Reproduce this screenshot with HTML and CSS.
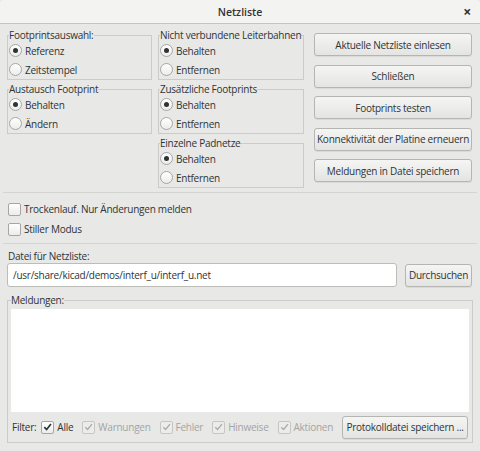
FILE: index.html
```html
<!DOCTYPE html>
<html lang="de">
<head>
<meta charset="utf-8">
<title>Netzliste</title>
<link rel="stylesheet" href="styles.css">
</head>
<body>
<div class="window">
  <div class="titlebar">
    <span class="title">Netzliste</span>
    <span class="close">×</span>
  </div>

  <div class="top">
    <div class="col col1">
      <fieldset class="group">
        <legend>Footprintsauswahl:</legend>
        <div class="opt"><span class="radio on"></span>Referenz</div>
        <div class="opt"><span class="radio"></span>Zeitstempel</div>
      </fieldset>
      <fieldset class="group">
        <legend>Austausch Footprint</legend>
        <div class="opt"><span class="radio on"></span>Behalten</div>
        <div class="opt"><span class="radio"></span>Ändern</div>
      </fieldset>
    </div>
    <div class="col col2">
      <fieldset class="group">
        <legend>Nicht verbundene Leiterbahnen</legend>
        <div class="opt"><span class="radio on"></span>Behalten</div>
        <div class="opt"><span class="radio"></span>Entfernen</div>
      </fieldset>
      <fieldset class="group">
        <legend>Zusätzliche Footprints</legend>
        <div class="opt"><span class="radio on"></span>Behalten</div>
        <div class="opt"><span class="radio"></span>Entfernen</div>
      </fieldset>
      <fieldset class="group">
        <legend>Einzelne Padnetze</legend>
        <div class="opt"><span class="radio on"></span>Behalten</div>
        <div class="opt"><span class="radio"></span>Entfernen</div>
      </fieldset>
    </div>
    <div class="col col3">
      <button class="btn big">Aktuelle Netzliste einlesen</button>
      <button class="btn big">Schließen</button>
      <button class="btn big">Footprints testen</button>
      <button class="btn big">Konnektivität der Platine erneuern</button>
      <button class="btn big">Meldungen in Datei speichern</button>
    </div>
  </div>

  <div class="sep"></div>

  <div class="checks">
    <div class="chk-row"><span class="check"></span>Trockenlauf. Nur Änderungen melden</div>
    <div class="chk-row"><span class="check"></span>Stiller Modus</div>
  </div>

  <div class="sep sep2"></div>

  <div class="file-label">Datei für Netzliste:</div>
  <div class="file-row">
    <div class="input">/usr/share/kicad/demos/interf_u/interf_u.net</div>
    <button class="btn browse">Durchsuchen</button>
  </div>

  <fieldset class="group messages">
    <legend>Meldungen:</legend>
    <div class="log"></div>
    <div class="filter">
      <span class="filter-label">Filter:</span>
      <span class="fchk"><span class="check on"><svg viewBox="0 0 12 12" width="12" height="12"><path d="M2.5 6.2 L5 8.7 L9.8 2.8" fill="none" stroke="#2e3436" stroke-width="1.8"/></svg></span>Alle</span>
      <span class="fchk dis"><span class="check on"><svg viewBox="0 0 12 12" width="12" height="12"><path d="M2.5 6.2 L5 8.7 L9.8 2.8" fill="none" stroke="#a9aba9" stroke-width="1.4"/></svg></span>Warnungen</span>
      <span class="fchk dis"><span class="check on"><svg viewBox="0 0 12 12" width="12" height="12"><path d="M2.5 6.2 L5 8.7 L9.8 2.8" fill="none" stroke="#a9aba9" stroke-width="1.4"/></svg></span>Fehler</span>
      <span class="fchk dis"><span class="check on"><svg viewBox="0 0 12 12" width="12" height="12"><path d="M2.5 6.2 L5 8.7 L9.8 2.8" fill="none" stroke="#a9aba9" stroke-width="1.4"/></svg></span>Hinweise</span>
      <span class="fchk dis"><span class="check on"><svg viewBox="0 0 12 12" width="12" height="12"><path d="M2.5 6.2 L5 8.7 L9.8 2.8" fill="none" stroke="#a9aba9" stroke-width="1.4"/></svg></span>Aktionen</span>
      <button class="btn save">Protokolldatei speichern ...</button>
    </div>
  </fieldset>
</div>
</body>
</html>
```

FILE: styles.css
```css
* { box-sizing: border-box; }
html, body { margin: 0; padding: 0; }
body {
  width: 480px;
  height: 451px;
  background: #e8e8e7;
  font-family: "Open Sans", "Noto Sans", sans-serif;
  font-size: 10px;
  letter-spacing: -0.25px;
  color: #2e3436;
  overflow: hidden;
}
.window { width: 480px; height: 451px; display: flex; flex-direction: column; }

.titlebar {
  height: 24px;
  flex: none;
  background: #f3f3f2;
  border-bottom: 1px solid #c4c4c1;
  display: flex;
  align-items: center;
  justify-content: center;
  position: relative;
  border-radius: 4px 4px 0 0;
}
.title { font-weight: 600; font-size: 10.5px; color: #2e3436; letter-spacing: 0; }
.close {
  position: absolute;
  right: 9px;
  top: 4px;
  font-size: 14px;
  font-weight: 700;
  line-height: 16px;
}

.top {
  display: flex;
  padding: 5px 8px 0 7px;
  flex: none;
}
.col { display: flex; flex-direction: column; }
.col1 { width: 145px; gap: 3px; }
.col2 { width: 146px; margin-left: 6px; gap: 3px; }
.col3 { width: 158px; margin-left: 10px; padding-top: 4px; gap: 8.5px; }

.group {
  margin: 0;
  padding: 0 2px 0 1px;
  border: 1px solid #cbcbc8;
  min-width: 0;
}
.group legend {
  padding: 0;
  margin-left: 0;
  line-height: 12px;
  height: 12px;
  white-space: nowrap;
  color: #2e3436;
}
.opt {
  height: 19px;
  display: flex;
  align-items: center;
  white-space: nowrap;
}
.radio {
  width: 13px;
  height: 13px;
  border-radius: 50%;
  border: 1px solid #a6a6a3;
  background: linear-gradient(#ffffff, #ececeb);
  margin-right: 3px;
  flex: none;
  display: flex;
  align-items: center;
  justify-content: center;
}
.radio.on::after {
  content: "";
  width: 5px;
  height: 5px;
  border-radius: 50%;
  background: #2e3436;
}

.btn {
  font-family: inherit;
  font-size: 10px;
  letter-spacing: -0.25px;
  color: #2e3436;
  border: 1px solid #b5b5b2;
  border-radius: 3px;
  background: linear-gradient(#f5f5f4, #e4e4e2);
  box-shadow: 0 1px 0 rgba(0,0,0,0.06);
  padding: 0 2px;
  white-space: nowrap;
  margin: 0;
}
.btn.big { height: 23px; width: 158px; }

.sep {
  flex: none;
  height: 0;
  border-top: 1px solid #d4d4d1;
  margin: 4px 3px 0;
}
.checks { flex: none; padding: 6px 0 0 8px; }
.chk-row {
  height: 20px;
  display: flex;
  align-items: center;
}
.check {
  width: 13px;
  height: 13px;
  border: 1px solid #a6a6a3;
  border-radius: 2px;
  background: linear-gradient(#ffffff, #ececeb);
  margin-right: 3px;
  flex: none;
  display: inline-flex;
  align-items: center;
  justify-content: center;
}
.sep2 { margin-top: 4px; }

.file-label {
  flex: none;
  margin: 5px 0 0 8px;
  line-height: 14px;
  height: 14px;
}
.file-row {
  flex: none;
  display: flex;
  align-items: center;
  padding: 0 8px 0 7px;
  margin-top: 0;
  height: 24px;
}
.input {
  flex: 1;
  height: 24px;
  background: #ffffff;
  border: 1px solid #bcbcb9;
  border-radius: 3px;
  display: flex;
  align-items: center;
  padding-left: 5px;
  margin-right: 8px;
}
.btn.browse { width: 67px; height: 23px; padding: 0; }

.messages {
  flex: none;
  margin: 7px 7px 0 7px;
  padding: 0 3px 0 3px;
  height: 149px;
}
.log {
  height: 103px;
  background: #ffffff;
  margin-top: 3px;
}
.filter {
  display: flex;
  align-items: center;
  height: 24px;
  margin-top: 3px;
  padding-left: 1px;
  white-space: nowrap;
}
.filter-label { margin-right: 5px; flex: none; }
.fchk { display: inline-flex; align-items: center; margin-right: 9px; flex: none; }
.fchk .check { margin-right: 3px; }
.fchk.dis { color: #a3a5a3; }
.fchk.dis .check { border-color: #c6c6c3; background: #ececeb; }
.btn.save { flex: 0 1 126px; min-width: 0; margin-left: auto; margin-right: 1px; height: 23px; padding: 0; }
```
